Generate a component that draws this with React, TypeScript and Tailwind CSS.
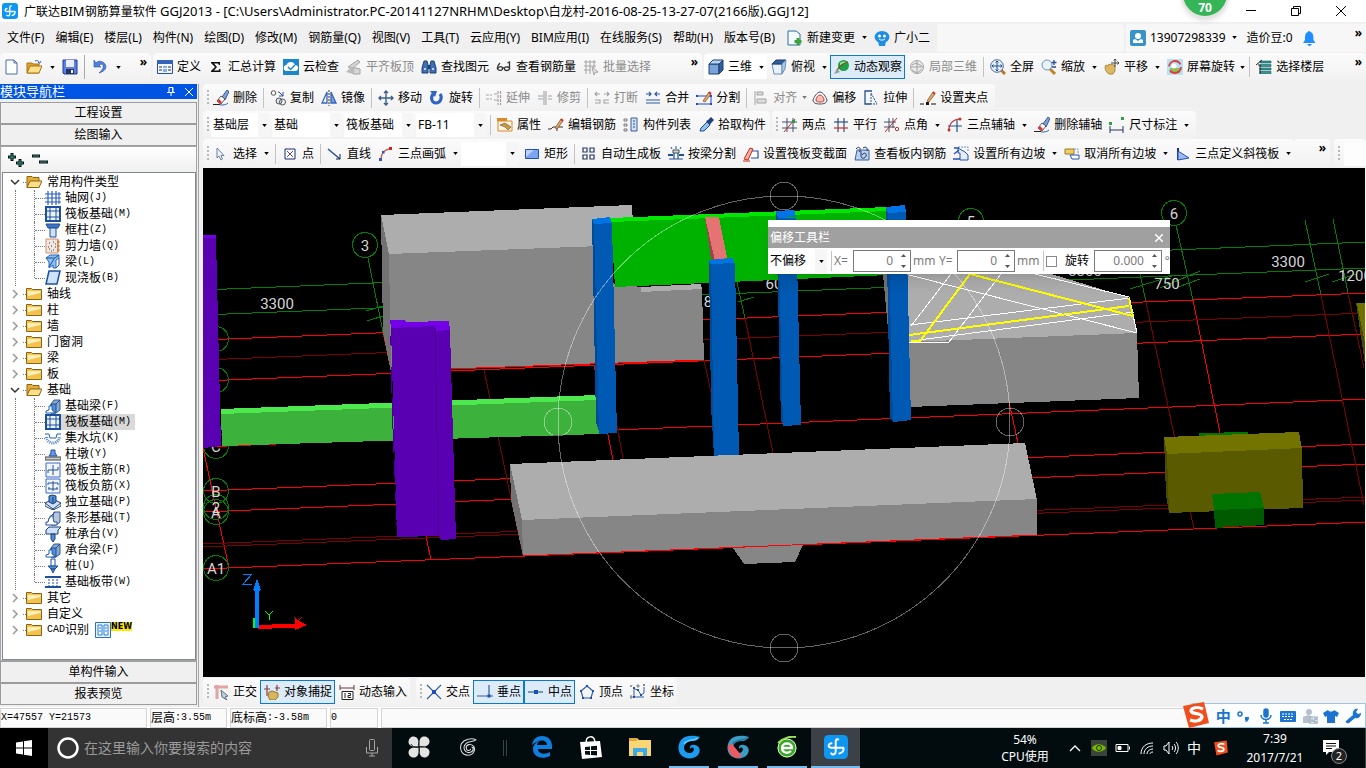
import React from "react";
import type { ReactNode } from "react";

const B = "#2b5aa8";
const D = "#1f3f6e";
const G = "#a3a3a3";

const pencil = (
  <>
    <path d="M7 11 13 2l2 2-6 8z" fill="#e0a868" stroke="#7a4a20" strokeWidth=".7" />
    <path d="M13 2l2 2" stroke="#c33" strokeWidth="2" />
  </>
);
const brush = (
  <>
    <path d="M0 14.500h7" stroke="#222" />
    <path d="M9 7 14 0l2 1.500L12 10z" fill="#7ea2e0" stroke={D} strokeWidth=".8" />
    <path d="M4 11 8 6l4 3-4 5z" fill="#fff" stroke="#333" strokeWidth=".8" />
    <path d="M4 11l2-2 3 3-2 2z" fill="#d33" />
    <path d="M7 15c3 0 6 0 8-2" stroke="#3560b0" fill="none" />
  </>
);
const beam = (
  <>
    <path d="M9 2h6v10l-4 3H6V6z" fill="#8fa8c8" stroke={B} />
    <path d="M6 6h5v9H6z" fill="#4f8fd6" stroke="#1d4f98" />
    <path d="M11 6l4-4" stroke="#1d4f98" />
    <path d="M1 15v-2l3-1V8h3v4l2 1v2z" fill="#fff" stroke="#1d5cb0" />
  </>
);
const raft = (
  <>
    <path d="M1 1h14v14H1z" fill="#eaf2ff" stroke="#1e4f9c" strokeWidth="2" />
    <path d="M5 2v12M11 2v12M2 5h12M2 11h12" stroke="#1e4f9c" />
  </>
);

const icons: Record<string, ReactNode> = {
  app: (
    <>
      <rect width="16" height="16" rx="3" fill="#0e97f2" />
      <path
        d="M9.500 3C8 2.500 7.800 3.500 7.800 5v6c0 2-2 2.500-3 1.200M13 8.500H5c-2.500 0-2.500-2.500 0-3M13 8.500c.3 2-.8 3.300-2.800 3.800"
        stroke="#fff"
        strokeWidth="1.300"
        strokeLinecap="round"
        fill="none"
      />
    </>
  ),
  newfile: <path d="M2 1h8l3 3v11H2zM10 1v3h3" fill="#fff" stroke="#4a6fa8" />,
  open: (
    <>
      <path d="M1 14V4h5l1 1h6v9z" fill="#e0a030" stroke="#a87414" />
      <path d="M1 14 4 7h12l-3 7z" fill="#ffe08a" stroke="#a87414" />
      <path d="M9 2c3-1 4 0 4 2M12 3l1.500 1.500L15 2" stroke="#3b6fb5" fill="none" />
    </>
  ),
  save: (
    <>
      <path d="M1 1h14v14H2l-1-1z" fill="#5f7fe0" stroke="#223a9c" />
      <path d="M4 1h8v7H4z" fill="#e8eefc" />
      <path d="M4 10h8v5H4z" fill="#24355f" />
      <path d="M9 11h2v3H9z" fill="#fff" />
    </>
  ),
  undo: <path d="M2 1v7h7L7 6c3-2 5 0 4 3-1 2-2 3-4 5 7-2 8-6 6-9S6 1 4 4z" fill="#4f80e0" stroke="#2450a5" strokeWidth=".6" />,
  define: (
    <>
      <path d="M0.500 1.500h15v13H.5z" fill="#f3f7ff" stroke="#2450a5" />
      <path d="M0 1h16v4H0z" fill="#3565bb" />
      <path d="M2 8h3M2 11h3M11 8h3M11 11h3" stroke="#333" />
      <path d="M6 7h4v2H6zM6 10h4v3H6z" fill="#8bb0e8" />
    </>
  ),
  sigma: <path d="M3 3h9v3h-1l-1-1.500H6L9 8l-3 3.500h4.500L11.500 10h1v3H3v-1l4-4-4-4z" fill="#111" />,
  cloud: (
    <>
      <rect width="16" height="16" fill="#1c86cc" />
      <path d="M4 12a3 3 0 0 1-.5-6A4.500 4.500 0 0 1 12 6a3 3 0 0 1 0 6z" fill="#fff" />
      <path d="M5 8l2.500 2.500L12 6" stroke="#1c86cc" strokeWidth="1.500" fill="none" />
    </>
  ),
  flat: (
    <>
      <path d="M2 8 12 1l2 2-7 6zM7 9v6h7v-5l-4-1z" fill="#d5d5d5" stroke={G} />
      <path d="M0 13l5-5 2 1v6z" fill="#bbb" />
    </>
  ),
  find: (
    <>
      <path d="M1 14V9l2-7h3l1 4v8zM15 14V9l-2-7h-3L9 6v8z" fill="#3f6fb8" stroke={D} />
      <path d="M7 6h2v4H7z" fill={D} />
      <path d="M3 10h2M11 10h2" stroke="#bcd4f7" strokeWidth="2" />
    </>
  ),
  glasses: <path d="M4 4C2 6 1 8 1.500 10c1 2 5 2 5-.5S3 7 1.500 10M8.500 10c0 2 4 2 5 0s-4-3-5-1zM6.500 9h2M13.500 10V3l-2 1" stroke="#333" strokeWidth="1.300" fill="none" />,
  batch: (
    <>
      <path d="M1 3h12M1 7h12M1 11h7M3 1v14M7 1v14M11 1v8" stroke={G} />
      <path d="M9 8l6 5-3 .5L11 16z" fill="#e5e5e5" stroke={G} />
    </>
  ),
  cube: (
    <>
      <path d="M1 5h10v10H1z" fill="#7aa3dc" stroke={D} />
      <path d="M1 5l4-4h10l-4 4z" fill="#b8d4f5" stroke={D} />
      <path d="M11 5l4-4v10l-4 4z" fill="#2f5f9c" stroke={D} />
    </>
  ),
  cubeTop: (
    <>
      <path d="M1 5h10v10H3z" fill="#e8f1fc" stroke="#6d8db8" />
      <path d="M1 5l4-4h10l-4 4z" fill="#2f5f9c" stroke={D} />
      <path d="M11 5l4-4-1 9-3 5z" fill="#a8cbf0" stroke="#6d8db8" />
    </>
  ),
  orbit: (
    <>
      <circle cx="9.500" cy="6.500" r="5.500" fill="#1ea14a" />
      <path d="M6 4c2-2 5-2 6 0-3 0-5 1-6 3z" fill="#9be08e" />
      <path d="M2 14C3 9 9 4 14 3" stroke="#8a4a20" strokeWidth="1.200" fill="none" />
      <path d="M0 15l6-2-3-3z" fill="#999" />
    </>
  ),
  partial: (
    <>
      <circle cx="8" cy="8" r="6.500" fill="#ececec" stroke={G} />
      <path d="M3 6l4-2 6 3M3 11l5 3 5-4M8 2v12M2 8h12" stroke={G} fill="none" />
    </>
  ),
  full: (
    <>
      <path d="M11 11l4 4" stroke="#b57b20" strokeWidth="3" />
      <circle cx="7" cy="7" r="6.300" fill="#e6effc" stroke="#4a6a9a" />
      <path d="M7 2v10M2 7h10M5.500 3.500 7 2l1.500 1.500M5.500 10.500 7 12l1.500-1.500M3.500 5.500 2 7l1.500 1.500M10.500 5.500 12 7l-1.500 1.500" stroke="#24508f" fill="none" />
    </>
  ),
  zoom: (
    <>
      <path d="M9 10l5 5" stroke="#c08325" strokeWidth="3" />
      <circle cx="6" cy="6" r="5" fill="#e8f3ff" stroke="#7891b5" />
      <path d="M13 1v5M10.500 3.500h5M11 8h4" stroke="#24508f" strokeWidth="1.300" />
    </>
  ),
  pan: (
    <>
      <path d="M1 8l1-2 2 1 1-2 2 1 1-1 3 2v5l-2 3H5c-2-1-4-4-4-7z" fill="#dcb862" stroke="#9a7a2a" strokeWidth=".8" />
      <path d="M11 0v8M7 4h8M9.500 1.500 11 0l1.500 1.500M13.500 2.500 15 4l-1.500 1.500" stroke="#444" fill="none" />
    </>
  ),
  screenRot: (
    <>
      <rect width="16" height="16" rx="1" fill="#b8e0f5" />
      <path d="M3 9h10v5H3z" fill="#8cc152" />
      <circle cx="8" cy="8" r="6" fill="none" stroke="#e03c3c" strokeWidth="1.800" strokeDasharray="15 4" />
      <circle cx="7" cy="7" r="2.500" fill="#fff" />
    </>
  ),
  floors: (
    <>
      <path d="M4 2h11v2H4zM4 5.500h11v2H4zM4 9h11v2H4zM4 12.500h11v2H4z" fill="#2f9a96" stroke="#15585a" strokeWidth=".6" />
      <path d="M0 6l6-5M2 6h2v9" stroke="#222" fill="none" />
    </>
  ),
  brush,
  copy: (
    <>
      <circle cx="3.500" cy="3" r="2.300" fill="none" stroke="#555" />
      <circle cx="9" cy="11" r="3" fill="#dde6f5" stroke="#555" />
      <circle cx="12.500" cy="12" r="3" fill="none" stroke="#555" />
      <path d="M8 2h1l4 4M13 2v4H9" stroke="#24508f" fill="none" />
    </>
  ),
  mirror: (
    <>
      <path d="M6 2v11H1z" fill="none" stroke="#3565bb" strokeWidth="1.300" />
      <path d="M10 2v11h5z" fill="#7aa0e0" stroke="#3565bb" strokeWidth="1.300" />
      <path d="M8 0v16" stroke="#333" strokeDasharray="2 1" />
    </>
  ),
  move: <path d="M8 1v14M1 8h14M6 3l2-2 2 2M6 13l2 2 2-2M3 6 1 8l2 2M13 6l2 2-2 2" stroke="#3e5f8a" strokeWidth="1.400" fill="none" />,
  rotate: (
    <>
      <path d="M4 4c-3 4-1 9 3 9s7-5 4-9" stroke="#2f62c4" strokeWidth="3" fill="none" />
      <path d="M1 1h7L6 7z" fill="#2f62c4" />
    </>
  ),
  extend: <path d="M0 5h6M0 9h6M8 4h3M8 10h3M12 1v14M14.500 1v14" stroke={G} strokeWidth="1.200" strokeDasharray="3 1" />,
  trim: <path d="M1 6h5M1 9h5M7 1v14M9 1v14M11 6h4M11 9h4" stroke={G} strokeWidth="1.100" />,
  break: <path d="M1 4h5M3 2 1 4l2 2M10 4h5M13 2l2 2-2 2M1 10h5v3H1M15 10h-5v3h5" stroke={G} strokeWidth="1.100" fill="none" />,
  merge: <path d="M1 4h5M4 2l2 2-2 2M15 4h-5M12 2l-2 2 2 2M1 10h14M1 13h14" stroke={B} strokeWidth="1.200" fill="none" />,
  split: (
    <>
      <path d="M0 6h15v8H0" fill="none" stroke="#2346c4" />
      <path d="M0 5h2v2H0zM14 5h2v2h-2zM0 13h2v2H0zM14 13h2v2h-2z" fill="#2346c4" />
      {pencil}
    </>
  ),
  align: <path d="M2 1v14M4 2h6v3H4zM4 9h9v4H4z" stroke={G} fill="#ddd" />,
  offset: (
    <>
      <path d="M8 2c3 0 6 5 7 8 0 3-3 4-7 4s-7-1-7-4c1-3 4-8 7-8z" fill="none" stroke="#44506a" />
      <path d="M8 5c2 0 4 3 4 5s-2 2-4 2-4 0-4-2 2-5 4-5z" fill="#f8c0b8" stroke="#d03a2a" />
    </>
  ),
  stretch: (
    <>
      <path d="M9 1H2v13h6" fill="none" stroke="#24508f" strokeWidth="1.300" />
      <path d="M8 3l6 11M8 4v10h6" fill="none" stroke="#24508f" strokeDasharray="2 1" />
    </>
  ),
  grip: (
    <>
      <path d="M0 14h4M11 14h5" stroke="#111" />
      <path d="M6 12h3v3H6z" fill="#111" />
      {pencil}
    </>
  ),
  props: (
    <>
      <path d="M0 1h10v3H0z" fill="#d98a2a" />
      <path d="M1 4h14v10H1z" fill="#fdf3dc" stroke="#d98a2a" />
      <path d="M3 8l5-2 6 4-3 3-3-3z" fill="#c99a3c" stroke="#555" strokeWidth=".6" />
    </>
  ),
  editRebar: (
    <>
      <path d="M0 12h3l2-2h10M9 10v4" stroke="#333" fill="none" />
      {pencil}
    </>
  ),
  list: (
    <>
      <path d="M8 1h6v13H8z" fill="#d5e0f2" stroke="#3b5f9a" />
      <path d="M10 4h2M10 7h2M10 10h2" stroke="#24508f" />
      <path d="M1 2h3v2H1zM1 7h3v2H1zM1 12h3v2H1z" fill="#fff" stroke="#444" strokeWidth=".7" />
    </>
  ),
  picker: (
    <>
      <path d="M2 14 3 11l6-6 3 3-6 6z" fill="#8fc0f0" stroke="#24508f" />
      <path d="M8 4l2-1 3-3 3 3-3 3-1 2z" fill="#1e3f80" />
    </>
  ),
  twoPt: (
    <>
      <path d="M0 5h15M0 11h15M5 1v14M11 1v14" stroke="#44506a" />
      <path d="M2 15 13 2" stroke="#c03030" />
      <path d="M10 3h3v3h-3z" fill="#2a9a3a" />
    </>
  ),
  parallel: (
    <>
      <path d="M5 1v14M11 1v14" stroke="#44506a" strokeWidth="1.200" />
      <path d="M1 5h14" stroke="#24508f" strokeWidth="1.200" />
      <path d="M1 11h14" stroke="#c03030" strokeWidth="1.200" />
    </>
  ),
  ptAngle: (
    <>
      <path d="M0 5h12M0 10h11M5 1v14M9 1v10" stroke="#44506a" />
      <path d="M1 15 13 1" stroke="#c03030" />
      <circle cx="13" cy="12" r="1.700" fill="none" stroke="#c03030" />
    </>
  ),
  threePt: (
    <>
      <path d="M1 9h14M10 3v12" stroke="#24508f" strokeWidth="1.200" />
      <path d="M2 13C2 6 7 2 13 2" stroke="#c03030" fill="none" strokeWidth="1.200" />
      <circle cx="2" cy="13" r="1.500" fill="#c03030" />
      <circle cx="13" cy="2" r="1.500" fill="#c03030" />
    </>
  ),
  dim: (
    <>
      <path d="M1 9v7M14 9v7M1 13h13" stroke="#24355f" />
      <path d="M0 5h3v3H0zM12 0h3v3h-3z" fill="#2fa03c" />
    </>
  ),
  cursor: <path d="M4 2v10l2-2 2 4 1.500-1L8 9.500h3z" fill="#eef3fa" stroke="#5f7394" strokeWidth=".9" />,
  point: (
    <>
      <path d="M3 3h10v10H3z" fill="#fff" stroke="#1d2f6f" />
      <path d="M5 5l6 6M11 5l-6 6" stroke="#3355b5" />
      <path d="M7 7h2v2H7z" fill="#c03030" />
    </>
  ),
  line: (
    <>
      <path d="M1 3l12 10" stroke="#1d4aa0" strokeWidth="1.400" />
      <path d="M13 8v5H9" stroke="#223" fill="none" />
    </>
  ),
  arc: (
    <>
      <path d="M3 13C3 8 6 3 13 3" stroke="#c86a5a" strokeWidth="1.500" fill="none" />
      <path d="M1 12h3v3H1zM4 5h2.500v2.500H4z" fill="#3355b5" />
      <path d="M11 1h3v3h-3z" fill="#d02020" />
    </>
  ),
  rect: (
    <>
      <path d="M1.500 3.500h13v9h-13z" fill="#7da4f0" stroke="#2450b5" />
      <path d="M2 4h8l-8 7z" fill="#b9d0fb" />
    </>
  ),
  autoSlab: <path d="M2 2h4v4H2zM9 2h4v4H9zM2 9h4v4H2zM9 9h4v4H9z" fill="#fff" stroke="#24355f" strokeWidth="1.200" />,
  beamSplit: (
    <>
      <path d="M1 13h14M6 6v7M10 6v7" stroke="#24508f" strokeWidth="1.200" />
      <path d="M5 4h6v3H5z" fill="#f3d98a" stroke="#24508f" />
      <path d="M0 8h5v2H0zM11 8h5v2h-5z" fill="#24508f" />
      <path d="M8 0v3M3 1l1 2M13 1l-1 2" stroke="#24508f" />
    </>
  ),
  section: (
    <>
      <path d="M7 5h8v7H8" fill="#fff" stroke="#2450b5" strokeWidth="1.200" />
      <path d="M1 13 7 2l3 1-5 11z" fill="#f5b0a0" stroke="#c03020" />
      <path d="M0 15h7" stroke="#c03020" />
    </>
  ),
  slabRebar: (
    <>
      <path d="M3 4h12v10H1z" fill="#b9d0f0" stroke="#3b5f9a" />
      <path d="M2 3c3-4 6 0 3 3M7 5v5c0 3 4 3 5 0s-2-4-4-1M9 2c3-2 5 0 4 3" stroke="#24355f" fill="none" />
    </>
  ),
  slope: (
    <>
      <path d="M5 2v5h2v7h8V9L12 6z" fill="#e5eefc" stroke="#2450b5" />
      <path d="M5 1h10v5" stroke="#7a8fb5" strokeDasharray="2 1" fill="none" />
      <path d="M1 2h5M1 8l5-4M0 13h7" stroke="#2450b5" strokeWidth="1.300" />
    </>
  ),
  unslope: (
    <>
      <path d="M1 3h9v5H1z" fill="#f0cf60" stroke="#9a7a2a" />
      <path d="M6 9h9v4H8z" fill="#fff" stroke="#2450b5" />
      <path d="M10 3h4v5" stroke="#7a8fb5" strokeDasharray="2 1" fill="none" />
    </>
  ),
  slant: (
    <>
      <path d="M3 2v12" stroke="#1d2f6f" strokeWidth="2" />
      <path d="M3 5l11 7-11 2z" fill="#9dbcf0" stroke="#2450b5" />
    </>
  ),
  change: (
    <>
      <path d="M1 1h8l4 3v11H1z" fill="#f4fbff" stroke="#2a6f9a" />
      <path d="M11 8v7M7.500 11.500h7" stroke="#3aa335" strokeWidth="3" />
    </>
  ),
  robot: (
    <>
      <ellipse cx="8" cy="7" rx="7.500" ry="6" fill="#1f8fe6" />
      <path d="M4 11h8l-1 5H5z" fill="#1f8fe6" />
      <circle cx="5.500" cy="6" r="1.500" fill="#fff" />
      <circle cx="10.500" cy="6" r="1.500" fill="#fff" />
      <path d="M5 9c2 1.500 4 1.500 6 0" stroke="#fff" fill="none" />
    </>
  ),
  user: (
    <>
      <rect width="16" height="16" rx="2" fill="#3a93c8" />
      <circle cx="8" cy="6" r="3" fill="#fff" />
      <path d="M3 13v-3l2-1 3 2 3-2 2 1v3z" fill="#fff" />
    </>
  ),
  bell: <path d="M7.500 1h1l1 1c3 1 3 4 3 8l2 3H2l2-3c0-4 0-7 3-8zM6 14h5l-2 2H8z" fill="#1f8fff" />,
  gridJ: (
    <>
      <path d="M0 4h12M0 8h12M0 12h12M3 1v14M7 1v14M11 1v14" stroke="#2a5cc0" strokeWidth="1.200" />
      <path d="M13 3h2v2h-2zM13 7h2v2h-2zM13 11h2v2h-2z" fill="none" stroke="#2a5cc0" />
    </>
  ),
  raft,
  column: (
    <>
      <path d="M1 2h14l-2 4H3z" fill="#3f74c4" stroke="#1e4f9c" />
      <path d="M5 6h6v9H5z" fill="#cfe2fb" stroke="#1e4f9c" />
    </>
  ),
  shear: (
    <>
      <path d="M1 1h12v14H1z" fill="#f0e6e0" stroke="#d09070" />
      <path d="M4 5h1M8 4h1M6 8h1M10 9h1M4 11h1M8 12h1M3 9h1M10 6h1M6 13h1" stroke="#444" />
      <path d="M12 4h3M12 8h3M12 12h3M13 2v12" stroke="#d06a20" />
    </>
  ),
  beamL: (
    <>
      <path d="M1 4l4-3h9v3l-3 2v8H8v-3l-4 3V8z" fill="#8bc0f0" stroke="#2a6ab8" />
      <path d="M1 4h9l4-3M9 5 4 13M11 14l3-3V4" stroke="#1e4f9c" fill="none" />
    </>
  ),
  slab: <path d="M4 1h11l-3 13H1z" fill="#cfe2fb" stroke="#1e4f9c" strokeWidth="1.500" />,
  beam,
  pit: (
    <>
      <path d="M0 4h4l1 4h6l1-4h4" stroke="#2a5cc0" fill="none" />
      <path d="M1.500 7c1 8 12 8 13 0" stroke="#4a80d0" strokeDasharray="1 1" strokeWidth="3" fill="none" />
    </>
  ),
  pier: (
    <>
      <path d="M0 11h16v3H0z" fill="#ccc" stroke="#444" />
      <path d="M4 10l2-3V4h4v3l2 3z" fill="#6a9be0" stroke="#1e4f9c" />
    </>
  ),
  mainBar: (
    <>
      <path d="M1 1h14v14H1z" fill="#f0f5ff" stroke="#3a6ac8" />
      <path d="M8 3v10M3 11V8h10V5" stroke="#24508f" fill="none" />
    </>
  ),
  negBar: (
    <>
      <path d="M1 1h14v14H1z" fill="#f0f5ff" stroke="#3a6ac8" />
      <path d="M8 3v10M3 5h10v2M3 5v2M3 11h10M4 9v2M12 9v2" stroke="#24508f" fill="none" />
    </>
  ),
  isolated: (
    <>
      <path d="M0 9l8-4 8 4-8 6z" fill="#cfe2fb" stroke="#1e3f70" />
      <path d="M4 2l3-1 4 1v6l-3 2-4-2z" fill="#4f8fd6" stroke="#1e3f70" />
      <path d="M0 9v3l8 4v-2M16 9v3l-8 4M8 3v6" stroke="#1e3f70" fill="none" />
    </>
  ),
  strip: (
    <>
      <path d="M9 2h6v10l-4 3H6z" fill="#b9c4d4" stroke={B} />
      <path d="M6 6l4-4" stroke="#1e4f9c" />
      <path d="M1 15v-3h2l1-4h1V6h3v2l1 4h3v3z" fill="#fff" stroke="#1e4f9c" />
    </>
  ),
  pileCap: (
    <>
      <path d="M1 4l3-3h12l-3 3v4H1z" fill="#cfe2fb" stroke="#1e3f70" />
      <path d="M6 8h4v5l-2 3-2-3z" fill="#4f8fd6" stroke="#1e3f70" />
    </>
  ),
  pile: (
    <>
      <path d="M6 1h4v7H6z" fill="#fff" stroke="#1e4f9c" />
      <path d="M3 8h10l-3 3H6zM6 11h4l-2 4z" fill="#4f8fd6" stroke="#1e4f9c" />
    </>
  ),
  band: (
    <>
      <path d="M0 3h16M0 13h16" stroke="#1e4f9c" strokeWidth="2" />
      <path d="M4 2v12M8 2v12M12 2v12" stroke="#1e4f9c" strokeDasharray="2 1" />
    </>
  ),
  folder: (
    <>
      <path d="M.5 13.500v-11h5l1 1h9v10z" fill="#f2c14e" stroke="#8a6414" />
      <path d="M1.500 5h13v2L2 10z" fill="#fff0b8" />
    </>
  ),
  folderOpen: (
    <>
      <path d="M1 13.500v-11h5l1 1h6v10z" fill="#e8ac35" stroke="#8a6414" />
      <path d="M1 13.500 4 7h12l-3 6.500z" fill="#ffe08a" stroke="#8a6414" />
    </>
  ),
  cad: (
    <>
      <path d="M.5.5h15v15H.5z" fill="#e8f3ff" stroke="#2a6fc0" />
      <path d="M3 3h4v10H3zM9 3h4v10H9z" fill="#fff" stroke="#1f7fe0" />
      <path d="M4 6h2M4 9h2M10 6h2M10 9h2" stroke="#1f7fe0" />
    </>
  ),
  ortho: (
    <>
      <path d="M1 3h14M4 1v14" stroke="#dda6a2" strokeWidth="3" />
      <path d="M8 6l7 6-3 1 2 3-5-3z" fill="#c3ccd4" stroke="#5a7282" />
    </>
  ),
  snap: (
    <>
      <path d="M3 1v11M13 1v6M0 5h6M11 4h5" stroke="#8a4040" strokeWidth="1.200" />
      <path d="M5 8l3-1 3 1 3 1v4l-3 3H6l-2-4z" fill="#d8b45c" stroke="#9a7a2a" />
    </>
  ),
  dynInput: (
    <>
      <path d="M1 1v5M15 1v5M1 4h14" stroke="#6a3a3a" />
      <path d="M3 7.500h11v8H3z" fill="#fff" stroke="#222" />
      <path d="M6 9v5M9 9.500h2.500v2H9v2h3" stroke="#222" fill="none" />
    </>
  ),
  cross: (
    <>
      <path d="M1 1l14 14M15 1 1 15" stroke="#335f9a" strokeWidth="1.200" />
      <path d="M6 6h4v4H6z" fill="#1c50b5" />
    </>
  ),
  perp: (
    <>
      <path d="M0 12h16M12 1v11" stroke="#335f9a" strokeWidth="1.200" />
      <path d="M10.500 10.500h3v3h-3z" fill="#1c50b5" />
    </>
  ),
  mid: (
    <>
      <path d="M0 8h15" stroke="#335f9a" strokeWidth="1.200" />
      <path d="M6 6h4v4H6z" fill="#1c50b5" />
    </>
  ),
  vertex: (
    <>
      <path d="M8 2l6 5-2 7H4L2 7z" fill="none" stroke="#335f9a" strokeWidth="1.200" />
      <path d="M7 1h2v2H7zM13 6h2v2h-2zM1 6h2v2H1zM3 13h2v2H3zM11 13h2v2h-2z" fill="#1c50b5" />
    </>
  ),
  coord: (
    <>
      <path d="M4 4v9h10M5 5l3 1 3 5 3-2V3" stroke="#335f9a" fill="none" />
      <path d="M3 3h2v2H3zM3 12h2v2H3zM7 5h2v2H7zM10 10h2v2h-2z" fill="#1c50b5" />
      <path d="M0 1l1 2 1-2M13 0l2 2M15 0l-2 2M0 12h2v2H0zM7 1h2v2H7z" stroke="#555" strokeWidth=".7" fill="none" />
    </>
  ),
};

function Icon({ name, big }: { name: string; big?: boolean }) {
  return (
    <svg viewBox="0 0 16 16" className={big ? "size-6 shrink-0" : "size-4 shrink-0"} aria-hidden="true">
      {icons[name]}
    </svg>
  );
}

function Caret({ tight, dim }: { tight?: boolean; dim?: boolean }) {
  return (
    <span className={`flex shrink-0 items-center justify-center ${tight ? "w-2" : "w-3"}`}>
      <svg viewBox="0 0 6 4" className={`h-[3px] w-[5px] ${dim ? "fill-[#777]" : "fill-black"}`} aria-hidden="true">
        <path d="M0 0h6L3 4z" />
      </svg>
    </span>
  );
}

type ToolProps = { icon: string; label: string; off?: boolean; on?: boolean; caret?: boolean; tight?: boolean };
function Tool({ icon, label, off, on, caret, tight }: ToolProps) {
  return (
    <button
      type="button"
      disabled={off}
      className={`flex h-6 shrink-0 items-center whitespace-nowrap ${off ? "text-[#8b8b8b]" : "text-black"}`}
    >
      <span
        className={`flex h-full items-center gap-1 border pr-0.5 pl-[3px] ${
          on ? "border-[#0b78d7] bg-[#dcebf8]" : "border-transparent"
        }`}
      >
        <Icon name={icon} />
        {label}
      </span>
      {(caret || tight) && <Caret tight={tight} dim={off} />}
    </button>
  );
}

function Sep() {
  return (
    <span className="flex h-5 w-1.5 shrink-0 justify-center">
      <span className="w-px bg-[#c3c3c3]" />
    </span>
  );
}

function Grip() {
  return <span className="ml-1 h-4 w-0.5 shrink-0 bg-[repeating-linear-gradient(#b8b8b8_0_2px,transparent_2px_4px)]" />;
}

function More() {
  return (
    <button type="button" aria-label="更多" className="self-start px-1 pt-px leading-4 font-bold">
      »
    </button>
  );
}

const strip = "flex shrink-0 items-center rounded-sm bg-linear-to-b from-[#fbfbfb] to-[#f1f1f1]";

function Combo({ label, value, width }: { label: string; value: string; width: string }) {
  return (
    <span className={`flex h-6 shrink-0 items-center bg-white ${width}`}>
      <select aria-label={label} className="h-full min-w-0 flex-1 appearance-none bg-white pl-0.5 outline-none">
        <option>{value}</option>
      </select>
      <span className="flex h-full items-center bg-[#f6f6f6]">
        <Caret />
      </span>
    </span>
  );
}

const menus = ["文件(F)", "编辑(E)", "楼层(L)", "构件(N)", "绘图(D)", "修改(M)", "钢筋量(Q)", "视图(V)", "工具(T)", "云应用(Y)", "BIM应用(I)", "在线服务(S)", "帮助(H)", "版本号(B)"];

function TitleBar() {
  return (
    <header className="relative flex h-[22px] items-center bg-white pl-0.5">
      <Icon name="app" />
      <h1 className="ml-1.5 flex-1 text-[13px] whitespace-nowrap">
        <span className="text-xs">广联达</span>BIM<span className="text-xs">钢筋算量软件</span>
        {" GGJ2013 - [C:\\Users\\Administrator.PC-20141127NRHM\\Desktop\\"}
        <span className="text-xs">白龙村</span>-2016-08-25-13-27-07(2166<span className="text-xs">版</span>).GGJ12]
      </h1>
      <div className="absolute -top-[30px] right-[137px] z-10 flex size-12 items-end justify-center rounded-full border-2 border-[#e4e4e4] bg-[#35b558] font-bold text-white shadow-md">
        70
      </div>
      <div className="flex items-center gap-[35px] pr-5">
        <button type="button" aria-label="最小化">
          <svg viewBox="0 0 10 10" className="size-2.5" stroke="#000" fill="none"><path d="M0 4.500h10" /></svg>
        </button>
        <button type="button" aria-label="还原">
          <svg viewBox="0 0 10 10" className="size-2.5" stroke="#000" fill="none"><path d="M.5 2.500h7v7h-7zM2.500 2.500v-2h7v7h-2" /></svg>
        </button>
        <button type="button" aria-label="关闭">
          <svg viewBox="0 0 10 10" className="size-2.5" stroke="#000" fill="none"><path d="M0 0l10 10M10 0 0 10" /></svg>
        </button>
      </div>
    </header>
  );
}

function MenuBar() {
  return (
    <nav className="flex h-[31px] items-center pl-[7px]">
      <div className="flex shrink-0 gap-[11px]">
        {menus.map((m) => (
          <button key={m} type="button" className="whitespace-nowrap">{m}</button>
        ))}
      </div>
      <div className="ml-2 flex">
        <Tool icon="change" label="新建变更" caret />
        <Tool icon="robot" label="广小二" />
      </div>
      <div className="ml-1 h-7 flex-1 rounded-sm bg-[#f7f7f7]" />
      <div className="ml-0.5 flex h-7 w-60 shrink-0 items-center bg-[#f7f7f7]">
        <Tool icon="user" label="13907298339" caret />
        <span className="ml-1.5">造价豆:0</span>
        <button type="button" aria-label="消息" className="ml-2"><Icon name="bell" /></button>
        <span className="flex-1" />
        <More />
      </div>
    </nav>
  );
}

function MainTools() {
  return (
    <div className="flex h-[31px] items-start">
      <div className={`${strip} h-7 w-[151px] pl-0.5`}>
        <button type="button" aria-label="新建" className="ml-0.5 w-[22px]"><Icon name="newfile" /></button>
        <button type="button" aria-label="打开" className="flex items-center"><Icon name="open" /><span className="w-1" /><Caret /></button>
        <button type="button" aria-label="保存" className="ml-1"><Icon name="save" /></button>
        <span className="ml-1.5 h-6 w-px bg-[#aaa]" />
        <button type="button" aria-label="撤销" className="ml-[7px] flex items-center"><Icon name="undo" /><span className="w-1" /><Caret /></button>
        <span className="flex-1" />
        <More />
      </div>
      <div className={`${strip} ml-0.5 h-7 w-[549px]`}>
        <Tool icon="define" label="定义" />
        <Tool icon="sigma" label="汇总计算" />
        <Tool icon="cloud" label="云检查" />
        <Tool icon="flat" label="平齐板顶" off />
        <Tool icon="find" label="查找图元" />
        <Tool icon="glasses" label="查看钢筋量" />
        <Tool icon="batch" label="批量选择" off />
        <span className="flex-1" />
        <More />
      </div>
      <div className={`${strip} ml-0.5 h-7 flex-1`}>
        <span className="bg-white"><Tool icon="cube" label="三维" caret /></span>
        <Tool icon="cubeTop" label="俯视" caret />
        <Tool icon="orbit" label="动态观察" on />
        <Tool icon="partial" label="局部三维" off />
        <Sep />
        <Tool icon="full" label="全屏" />
        <Tool icon="zoom" label="缩放" caret />
        <Tool icon="pan" label="平移" caret />
        <Tool icon="screenRot" label="屏幕旋转" tight />
        <Sep />
        <Tool icon="floors" label="选择楼层" />
        <span className="flex-1" />
        <More />
      </div>
    </div>
  );
}

function EditTools() {
  return (
    <div className="flex flex-col">
      <div className="flex h-[27px]">
        <div className={`${strip} pr-1`}>
          <Grip />
          <Tool icon="brush" label="删除" />
          <Sep />
          <Tool icon="copy" label="复制" />
          <Tool icon="mirror" label="镜像" />
          <Sep />
          <Tool icon="move" label="移动" />
          <Tool icon="rotate" label="旋转" />
          <Sep />
          <Tool icon="extend" label="延伸" off />
          <Tool icon="trim" label="修剪" off />
          <Sep />
          <Tool icon="break" label="打断" off />
          <Tool icon="merge" label="合并" />
          <Tool icon="split" label="分割" />
          <Sep />
          <Tool icon="align" label="对齐" off tight />
          <Tool icon="offset" label="偏移" />
          <Tool icon="stretch" label="拉伸" />
          <Sep />
          <Tool icon="grip" label="设置夹点" />
        </div>
      </div>
      <div className="flex h-7">
        <div className={`${strip} pr-px`}>
          <Grip />
          <span className="ml-0.5 flex gap-0.5">
            <Combo label="楼层" value="基础层" width="w-[59px]" />
            <Combo label="构件大类" value="基础" width="w-[70px]" />
            <Combo label="构件类型" value="筏板基础" width="w-[70px]" />
            <Combo label="构件" value="FB-11" width="w-[70px]" />
          </span>
          <span className="w-px" />
          <Sep />
          <Tool icon="props" label="属性" />
          <Tool icon="editRebar" label="编辑钢筋" />
          <Tool icon="list" label="构件列表" />
          <Tool icon="picker" label="拾取构件" />
        </div>
        <div className={`${strip} ml-0.5 pr-1`}>
          <Grip />
          <Tool icon="twoPt" label="两点" />
          <Tool icon="parallel" label="平行" />
          <Tool icon="ptAngle" label="点角" caret />
          <Tool icon="threePt" label="三点辅轴" caret />
          <Tool icon="brush" label="删除辅轴" />
          <Tool icon="dim" label="尺寸标注" caret />
        </div>
      </div>
      <div className="flex h-[29px]">
        <div className={`${strip}`}>
          <Grip />
          <Tool icon="cursor" label="选择" caret />
          <Sep />
          <Tool icon="point" label="点" />
          <Sep />
          <Tool icon="line" label="直线" />
          <Tool icon="arc" label="三点画弧" caret />
          <Combo label="画法" value="" width="w-[57px]" />
          <span className="w-0.5" />
          <Tool icon="rect" label="矩形" />
          <Sep />
          <Tool icon="autoSlab" label="自动生成板" />
          <Tool icon="beamSplit" label="按梁分割" />
          <Tool icon="section" label="设置筏板变截面" />
          <Tool icon="slabRebar" label="查看板内钢筋" />
          <Tool icon="slope" label="设置所有边坡" caret />
          <Tool icon="unslope" label="取消所有边坡" caret />
          <Tool icon="slant" label="三点定义斜筏板" caret />
        </div>
        <div className={`${strip} w-9 justify-end`}><More /></div>
        <div className={`${strip} ml-1 flex-1`}><Grip /><span className="ml-1 h-6 flex-1 bg-[#fdfdfd]" /></div>
      </div>
    </div>
  );
}

type Node = { icon: string; text: string; latin?: string; sel?: boolean };
const common: Node[] = [
  { icon: "gridJ", text: "轴网", latin: "(J)" },
  { icon: "raft", text: "筏板基础", latin: "(M)" },
  { icon: "column", text: "框柱", latin: "(Z)" },
  { icon: "shear", text: "剪力墙", latin: "(Q)" },
  { icon: "beamL", text: "梁", latin: "(L)" },
  { icon: "slab", text: "现浇板", latin: "(B)" },
];
const foundation: Node[] = [
  { icon: "beam", text: "基础梁", latin: "(F)" },
  { icon: "raft", text: "筏板基础", latin: "(M)", sel: true },
  { icon: "pit", text: "集水坑", latin: "(K)" },
  { icon: "pier", text: "柱墩", latin: "(Y)" },
  { icon: "mainBar", text: "筏板主筋", latin: "(R)" },
  { icon: "negBar", text: "筏板负筋", latin: "(X)" },
  { icon: "isolated", text: "独立基础", latin: "(P)" },
  { icon: "strip", text: "条形基础", latin: "(T)" },
  { icon: "pileCap", text: "桩承台", latin: "(V)" },
  { icon: "beam", text: "承台梁", latin: "(F)" },
  { icon: "pile", text: "桩", latin: "(U)" },
  { icon: "band", text: "基础板带", latin: "(W)" },
];
const tree: { text: string; latin?: string; kids?: Node[] }[] = [
  { text: "常用构件类型", kids: common },
  { text: "轴线" }, { text: "柱" }, { text: "墙" }, { text: "门窗洞" }, { text: "梁" }, { text: "板" },
  { text: "基础", kids: foundation },
  { text: "其它" }, { text: "自定义" }, { text: "识别", latin: "CAD" },
];

const mono = "font-['Liberation_Mono',monospace] text-[10px]";

function Tree() {
  return (
    <ul className="min-h-0 flex-1 overflow-hidden border border-[#828790] bg-white pt-px leading-4">
      {tree.map((t) => (
        <li key={t.text}>
          <div className="flex h-4 items-center whitespace-nowrap">
            <svg viewBox="0 0 10 10" className="ml-[7px] size-2.5" fill="none" strokeWidth="1.500" stroke={t.kids ? "#333" : "#999"}>
              <path d={t.kids ? "M1 3l4 4 4-4" : "M3 1l4 4-4 4"} />
            </svg>
            <span className="ml-[3px] w-[3px] border-t border-dotted border-[#777]" />
            <Icon name={t.kids ? "folderOpen" : "folder"} />
            <span className="ml-[5px] flex items-center">
              {t.latin && <span className={mono}>{t.latin}</span>}
              {t.text}
            </span>
            {t.latin && (
              <>
                <span className="w-1.5" />
                <Icon name="cad" />
                <span className="self-start bg-[#ffe800] font-['DejaVu_Sans',sans-serif] text-[8px] leading-[9px] font-bold">NEW</span>
              </>
            )}
          </div>
          {t.kids && (
            <ul className="ml-3 border-l border-dotted border-[#777]">
              {t.kids.map((k, i) => (
                <li key={k.text + k.latin} className="flex h-4 items-center pl-[18px] whitespace-nowrap">
                  <span className={`border-l border-dotted border-[#777] ${i === t.kids!.length - 1 ? "h-2 self-start" : "h-4"}`} />
                  <span className="w-2.5 border-t border-dotted border-[#777]" />
                  <span className={`flex h-4 items-center gap-1 pr-1 ${k.sel ? "bg-[#d9d9d9]" : ""}`}>
                    <Icon name={k.icon} />
                    <span className="flex items-center">
                      {k.text}
                      <span className={mono}>{k.latin}</span>
                    </span>
                  </span>
                </li>
              ))}
            </ul>
          )}
        </li>
      ))}
    </ul>
  );
}

const navBtn = "h-[22px] shrink-0 border border-[#9c9c9c] bg-[#f0f0f0] leading-5";

function Sidebar() {
  return (
    <aside className="flex w-[199px] shrink-0 flex-col border-r border-[#a5a5a5] pr-px">
      <div className="flex h-[15px] shrink-0 items-center bg-[#0054e3] text-[13px] leading-[15px] text-white">
        模块导航栏
        <span className="flex-1" />
        <button type="button" aria-label="固定">
          <svg viewBox="0 0 8 9" className="h-[9px] w-2" fill="none" stroke="#fff"><path d="M2 .5h4v5H2zM5.500 0v6M0 5.500h8M4 6v3" /></svg>
        </button>
        <button type="button" aria-label="关闭" className="mr-1 ml-2.5">
          <svg viewBox="0 0 8 8" className="size-2" fill="none" stroke="#fff"><path d="M0 0l8 8M8 0 0 8" /></svg>
        </button>
      </div>
      <div className="mt-[3px] flex min-h-0 flex-1 flex-col">
        <button type="button" className={navBtn}>工程设置</button>
        <button type="button" className={navBtn}>绘图输入</button>
        <div className="flex min-h-0 flex-1 flex-col border border-[#a5a5a5] pl-px">
          <div className="flex h-[25px] shrink-0 items-center gap-2 bg-linear-to-b from-white to-[#f0f0f0] pl-1.5">
            <button type="button" aria-label="展开">
              <svg viewBox="0 0 16 15" className="h-[15px] w-4" fill="none"><path d="M0 5h8M4 1v8M8 11h8M12 7v8" stroke="#111" strokeWidth="3" /><path d="M1 5h6M4 2v6M9 11h6M12 8v6" stroke="#1f9a8a" /></svg>
            </button>
            <button type="button" aria-label="折叠">
              <svg viewBox="0 0 16 15" className="h-[15px] w-4" fill="none"><path d="M0 4h8M7 10h9" stroke="#111" strokeWidth="3" /><path d="M1 4h6M8 10h7" stroke="#1f9a8a" /></svg>
            </button>
          </div>
          <Tree />
        </div>
        <button type="button" className={navBtn}>单构件输入</button>
        <button type="button" className={navBtn}>报表预览</button>
      </div>
      <div className="h-0.5" />
    </aside>
  );
}

const bubbles: [number, number, string][] = [
  [365, 245, "3"], [971, 221, "5"], [1174, 213, "6"], [216, 568, "A1"], [216, 491, "B"], [216, 507, "2"], [216, 512, "A"], [216, 446, "C"], [216, 339, ""], [216, 380, ""],
];

function Scene() {
  return (
    <svg viewBox="203 168 1162 509" preserveAspectRatio="xMinYMin slice" className="size-full" shapeRendering="crispEdges">
      <g stroke="#008000" fill="none">
        <path d="M203 290 1366 242M203 315 1366 268M368 258 383 332M366 311l17-5M367 321l16-5M737 282l8 36M738 302l16-5M1140 274l6 28M1176 225l17 75M1305 220l16 75M1333 219l15 74M1130 289l42-13M1160 288l40-17M1178 287l22-8M1305 282l24-8M1332 282l24-8" />
      </g>
      <g stroke="#ff0000" fill="none">
        <path d="M203 340 1366 293M203 381 1366 334M203 447 1366 399M203 491 1366 444M203 512 1366 464M203 569 1366 522M203 448l26 120M383 332l8 38M426 536l5 24M594 365l19 95M1009 402l9 41M1193 300l27 133" />
      </g>
      <g stroke="#7d0000" fill="none">
        <path d="M203 360 1366 313M203 544 1366 497M203 547 1366 500M484 370l39 185M615 415l8 43M704 360l12 55M745 318l28 135M1146 302l48 227M1321 295l43 210M1348 293l16 75" />
      </g>
      <g fill="none" stroke="#008000">
        {bubbles.map(([x, y]) => <circle key={`${x}-${y}`} cx={x} cy={y} r="12.500" />)}
      </g>
      <g fill="#d6d6d6" fontFamily="Roboto, sans-serif" fontSize="15" textAnchor="middle" shapeRendering="auto">
        {bubbles.map(([x, y, t]) => <text key={`${x}-${y}`} x={x} y={y + 6}>{t}</text>)}
        <text x="277" y="309">3300</text>
        <text x="1288" y="267">3300</text>
        <text x="1085" y="276">3300</text>
        <text x="1167" y="289">750</text>
        <text x="1355" y="281">1200</text>
        <text x="774" y="289">60</text>
        <text x="708" y="307">8</text>
      </g>

      <path d="M381 215 632 205l2 40-245 9z" fill="#adadad" />
      <path d="M389 254 600 246l14 38 27 3v4l61-2 2 71-313 11z" fill="#868686" />
      <path d="M641 287l60-3 1 5-61 3z" fill="#adadad" />
      <path d="M381 215l8 39 2 118-8-40z" fill="#727272" />
      <path d="M391 371 704 360" stroke="#f00" />

      <path d="M221 409 598 395v7L221 415z" fill="#4de84d" />
      <path d="M221 414 598 400l2 34-378 12z" fill="#3cb23c" />

      <path d="M610 218 888 207v5L611 223z" fill="#00e600" />
      <path d="M611 222 888 211v64l-273 12z" fill="#00b200" />
      <path d="M705 217h14l8 41-13 2z" fill="#e67373" />
      <path d="M705 217l6 42 4 2z" fill="#984848" />

      <path d="M592 219l2 4 6 211-4-12z" fill="#004b97" />
      <path d="M594 223h18l5 210-18 1z" fill="#0059b2" />
      <path d="M592 219l18-2 2 6-18 1z" fill="#0073e6" />
      <path d="M709 260l2 4 3 192-3-50z" fill="#004b97" />
      <path d="M711 264l24-1 4 192-25 1z" fill="#0059b2" />
      <path d="M709 260l24-2 1 5-24 1z" fill="#0073e6" />
      <path d="M776 211l2 6 6 208-3-4z" fill="#004b97" />
      <path d="M778 218h18l5 207-18 1z" fill="#0059b2" />
      <path d="M776 211l18-1 2 7-18 1z" fill="#0073e6" />

      <path d="M883 274h7l2 100z" fill="#727272" />
      <path d="M888 250h85l157 48 7 35-228 9-20 2z" fill="#adadad" />
      <path d="M908 342 1137 333l2 65-230 9z" fill="#868686" />
      <path d="M909 275l228 58M1035 274l94 23 8 36M910 325l220-27M909 342h40l52-68M911 341 1134 312M911 326l40-52" stroke="#fff" fill="none" />
      <path d="M909 335 1129 306M911 341h9l50-67 163 42-4-18" stroke="#ffff00" strokeWidth="2" fill="none" />
      <path d="M886 207l2 5 5 210-3-4z" fill="#004b97" />
      <path d="M888 212l18-1 5 209-18 2z" fill="#0059b2" />
      <path d="M886 207l19-2 1 7-18 1z" fill="#0073e6" />

      <path d="M203 235h13v4h-13z" fill="#7300e6" />
      <path d="M203 238h13l5 208-18 2z" fill="#5900b2" />
      <path d="M390 320h15l1 2 43-1 1 10-14 1-2-6-43 2z" fill="#7300e6" />
      <path d="M391 328l43-2 2 5 14-1 6 209-15 1-2-4-42 1z" fill="#5900b2" />
      <path d="M390 320l7 217-5-120z" fill="#48008f" />
      <path d="M435 327l4 209" stroke="#48008f" />

      <path d="M510 464 1025 443l12 57-515 20z" fill="#adadad" />
      <path d="M522 520 1037 499v36l-514 21z" fill="#868686" />
      <path d="M510 464l12 56 1 36-12-56z" fill="#727272" />
      <path d="M523 556 1037 535" stroke="#f00" />
      <path d="M733 548l70-3-8 17-51 2z" fill="#868686" />

      <path d="M1199 436v-3l49-1v3z" fill="#007300" />
      <path d="M1164 437l135-5 3 17-135 5z" fill="#737300" />
      <path d="M1167 454l135-6 1 60-134 5z" fill="#5a5a00" />
      <path d="M1164 437l3 17 2 59-3-18z" fill="#4a4a00" />
      <path d="M1212 494l48-2 4 16-50 2z" fill="#007300" />
      <path d="M1214 510l50-2v17l-49 3z" fill="#005a00" />
      <path d="M1356 303h10v68z" fill="#4a4a00" />
      <path d="M1357 303h9v45z" fill="#737300" />

      <g fill="none" stroke="#fff" strokeOpacity=".4">
        <circle cx="784" cy="422" r="226" />
        <circle cx="784" cy="196" r="14" />
        <circle cx="784" cy="648" r="14" />
        <circle cx="558" cy="422" r="14" />
        <circle cx="1010" cy="422" r="14" />
      </g>

      <path d="M256 619h-2v8h6" stroke="#0f0" strokeWidth="2" fill="none" />
      <path d="M258 627 300 625.500" stroke="#f00" strokeWidth="4" />
      <path d="M295 619l12 6-12 5z" fill="#f00" />
      <path d="M257 628V588" stroke="#0080ff" strokeWidth="4" />
      <path d="M257 579l4 11-4 3-4-3z" fill="#0080ff" />
      <path d="M243 574h9l-9 10h9" stroke="#0080ff" fill="none" />
      <path d="M265 611l4 4 4-4M269 615v5" stroke="#0f0" fill="none" />
      <path d="M294 617l8 8M302 617l-8 8" stroke="#f00" fill="none" />
    </svg>
  );
}

function Spin({ label, value, width }: { label: string; value: string; width: string }) {
  return (
    <span className={`flex h-[22px] shrink-0 items-center border border-[#7a7a7a] bg-white ${width}`}>
      <input aria-label={label} defaultValue={value} className="min-w-0 flex-1 bg-transparent pr-2 text-right text-xs text-[#7b7b7b] outline-none" />
      <svg viewBox="0 0 5 14" className="mr-1 h-3.5 w-[5px] fill-[#555]" aria-hidden="true"><path d="M0 3h5L2.500 0zM0 11h5l-2.500 3z" /></svg>
    </span>
  );
}

function OffsetBar() {
  return (
    <section className="absolute top-[52px] left-[565px] w-[402px] border-t-[7px] border-white bg-white shadow-lg">
      <div className="flex h-[21px] items-center bg-[#a0a0a0] pr-[7px] pl-0.5 text-white">
        <h2 className="flex-1">偏移工具栏</h2>
        <button type="button" aria-label="关闭">
          <svg viewBox="0 0 8 8" className="size-2" stroke="#fff" strokeWidth="1.500"><path d="M0 0l8 8M8 0 0 8" /></svg>
        </button>
      </div>
      <div className="flex h-[26px] items-center whitespace-nowrap text-[#7b7b7b]">
        <span className="text-black"><Combo label="偏移方式" value="不偏移" width="w-[59px]" /></span>
        <span className="w-px" />
        <Sep />
        <span className="w-[19px]">X=</span>
        <Spin label="X" value="0" width="w-[58px]" />
        <span className="w-7 pl-0.5">mm</span>
        <span className="w-[18px]">Y=</span>
        <Spin label="Y" value="0" width="w-[58px]" />
        <span className="w-[25px] pl-0.5">mm</span>
        <Sep />
        <label className="flex flex-1 items-center gap-2 text-black">
          <input type="checkbox" className="size-[11px] appearance-none border border-[#8a8a8a] bg-white" />
          旋转
        </label>
        <Spin label="角度" value="0.000" width="w-[68px]" />
        <span className="w-2 text-right">°</span>
      </div>
    </section>
  );
}

function StatusBar() {
  const cell = "flex items-center border border-[#d4d4d4] bg-[#fafafa] whitespace-nowrap";
  const half = "font-['Liberation_Mono',monospace] text-[10px]";
  return (
    <footer className="relative flex h-[21px] shrink-0 gap-[3px] bg-white pt-px">
      <div className={`${cell} ${half} w-[147px]`}>X=47557 Y=21573</div>
      <div className={`${cell} w-[77px]`}>层高<span className={half}>:3.55m</span></div>
      <div className={`${cell} w-[97px]`}>底标高<span className={half}>:-3.58m</span></div>
      <div className={`${cell} ${half} w-12`}>0</div>
      <div className={`${cell} flex-1`} />
      <div className="absolute right-0 bottom-0 flex h-[25px] w-[177px] items-center justify-between rounded-l border border-[#9fc3e0] bg-[#fbfdff] pr-1 text-[#1c74d0]">
        <svg viewBox="0 0 28 28" className="-mt-0.5 -ml-2 size-7">
          <path d="M1 5 22 1l5 21-20 5z" fill="#f04e1c" />
          <path d="M21 8C15 5 9 7 9 10c1 4 11 1 11 6-1 4-7 5-12 3" fill="none" stroke="#fff" strokeWidth="3.200" />
        </svg>
        <span className="text-[15px] font-bold">中</span>
        <svg viewBox="0 0 16 16" className="size-4"><circle cx="4" cy="6" r="2" fill="none" stroke="currentColor" strokeWidth="1.500" /><path d="M9 9h4c0 3-1 4-3 5l-1-1 1-1H9z" fill="currentColor" /></svg>
        <svg viewBox="0 0 16 16" className="size-4" fill="none" stroke="currentColor" strokeWidth="1.500"><rect x="6" y="1" width="4" height="8" rx="2" fill="currentColor" /><path d="M3 7c0 6 10 6 10 0M8 12v3M5 15h6" /></svg>
        <svg viewBox="0 0 16 16" className="size-4"><rect y="3" width="16" height="11" rx="1" fill="currentColor" /><path d="M2 6h12M2 8.500h12M4 11.500h8" stroke="#fff" strokeDasharray="2 1" /></svg>
        <svg viewBox="0 0 16 16" className="size-4" fill="#b4c0d0"><circle cx="7" cy="4" r="3" /><path d="M1 15V9l5-2 5 2v6z" /><path d="M8 9h8v7H8z" fill="#dfe6ef" stroke="#9aa8bc" /><path d="M10 11v3M12 11h3M12 12v2h3" stroke="#8090a8" fill="none" /></svg>
        <svg viewBox="0 0 16 16" className="size-4" fill="currentColor"><path d="M5 2c1 2 5 2 6 0l5 3-2 4-2-1v7H4V8L2 9 0 5z" /></svg>
        <svg viewBox="0 0 16 16" className="size-4"><path d="M1 13 8 7c-1-4 2-7 5-6l-2 3 2 2 3-1c0 4-3 6-6 5l-6 5c-2 1-4-1-3-2z" fill="currentColor" /></svg>
      </div>
    </footer>
  );
}

function TaskCell({ label, on, open, children }: { label: string; on?: boolean; open?: boolean; children: ReactNode }) {
  return (
    <button type="button" aria-label={label} className={`flex h-full w-[49px] shrink-0 flex-col items-center ${on ? "bg-[#3b4146]" : ""}`}>
      <span className="flex flex-1 items-center">{children}</span>
      <span className={`h-0.5 ${on ? "w-full" : "w-10"} ${on || open ? "bg-[#76b9ed]" : ""}`} />
    </button>
  );
}

function TaskBar() {
  return (
    <footer className="flex h-10 shrink-0 items-center bg-[#020b0e] text-white">
      <button type="button" aria-label="开始" className="flex h-full w-12 items-center justify-center bg-black">
        <svg viewBox="0 0 16 16" className="size-4" fill="#fff"><path d="M0 2.500 7 1.500v6H0zM8 1.300 16 0v7.500H8zM0 8.500h7v6l-7-1zM8 8.500h8V16l-8-1.300z" /></svg>
      </button>
      <label className="flex h-full w-[344px] items-center bg-[#333] px-2">
        <svg viewBox="0 0 24 24" className="size-6 shrink-0"><circle cx="12" cy="12" r="9.500" fill="none" stroke="#fff" strokeWidth="2.500" /></svg>
        <input aria-label="搜索" placeholder="在这里输入你要搜索的内容" className="ml-1 min-w-0 flex-1 bg-transparent text-sm outline-none placeholder:text-[#9a9a9a]" />
        <svg viewBox="0 0 12 18" className="mr-1.5 h-[18px] w-3 shrink-0" fill="none" stroke="#a5a5a5"><rect x="3.500" y=".5" width="5" height="11" rx="1" /><path d="M.5 8v6h11V8M6 14v3M3 17h6" /></svg>
      </label>
      <span className="w-0.5" />
      <TaskCell label="风扇">
        <svg viewBox="0 0 22 22" className="size-[22px]">
          {[0, 90, 180, 270].map((r) => (
            <g key={r} transform={`rotate(${r} 11 11)`}>
              <path d="M10.500 10.500H6C2 10.500.5 8 .5 6c0-3 2-5.500 5-5.500 4 0 5 4 5 6z" fill="#e4e4e4" />
              <path d="M11 11C10 6 12 4 14 3" fill="none" stroke="#020b0e" />
            </g>
          ))}
        </svg>
      </TaskCell>
      <TaskCell label="螺旋">
        <svg viewBox="0 0 22 22" className="size-5" fill="none" stroke="#d8d8d8" strokeWidth="1.200"><path d="M20 3c-5-2-13-1-16 4-3 6 0 13 7 13 6 0 9-6 6-10-3-3-8-2-8 2 0 3 4 4 5 1M20 3c-3 3-8 1-11 4-5 5-1 11 4 10 4-1 5-5 2-6" /></svg>
      </TaskCell>
      <span className="flex w-[25px] justify-center gap-0.5"><span className="h-4 w-px bg-[#3a4448]" /><span className="h-4 w-px bg-[#3a4448]" /></span>
      <TaskCell label="浏览器">
        <svg viewBox="0 0 22 22" className="size-[22px]"><path d="M1 9C2 3 6 0 11 0c6 0 10 4 10 10v3H7c0 5 7 6 12 3v4c-8 4-17 1-17-7 0-4 3-7 7-8C7 6 6 8 6 9h10c0-6-9-6-15 0z" fill="#1080e0" /></svg>
      </TaskCell>
      <TaskCell label="商店">
        <svg viewBox="0 0 22 24" className="h-6 w-[22px]"><path d="M0 7l20-1 2 16-20 2z" fill="#fff" /><path d="M6 8c0-8 8-8 9-1" fill="none" stroke="#fff" strokeWidth="1.500" /><path d="M5 12l5-.5V15H5zM11 11.300l6-.6V15h-6zM5 16h5v4l-5-.5zM11 16h6v4.500l-6-.4z" fill="#041014" /></svg>
      </TaskCell>
      <TaskCell label="文件管理器">
        <svg viewBox="0 0 22 20" className="h-5 w-[22px]"><path d="M0 1h8l2 2h12v16H0z" fill="#f8d676" /><path d="M0 1h8v3H0z" fill="#e0a83c" /><path d="M4 19v-8h14v8h-4v-4H8v4z" fill="#3fa9e8" /></svg>
      </TaskCell>
      {["#1c9cf0", "#3a9ec4"].map((c, i) => (
        <TaskCell key={c} label={i ? "广联达二" : "广联达一"} open>
          <svg viewBox="0 0 24 24" className="size-6" fill="none">
            <path d="M23 2c-3 4-5 4-8 4-5 0-8 3-8 7 0 3 3 5 6 5 2 0 4-2 4-4-1-2-3-2-4 0-1-3 2-5 5-4 5 1 6 6 3 10-4 4-12 5-17 0-4-5-3-12 1-16C9 0 17 0 23 2z" fill={c} />
            {i === 1 && <path d="M2 10l4-1 10 12-4 2c-6 0-10-6-10-13z" fill="#ee5a62" />}
            <path d="M21 3c-4 3-11 1-14 6" stroke={i ? "#2c6f98" : "#65d0ff"} strokeWidth="1.500" />
          </svg>
        </TaskCell>
      ))}
      <TaskCell label="安全浏览器" open>
        <svg viewBox="0 0 22 22" className="size-[22px]"><circle cx="11" cy="12" r="9.500" fill="#3aa52a" /><circle cx="11" cy="12" r="9" fill="none" stroke="#d9f5c0" /><path d="M6 12h10c0-6-10-6-10 0 0 5 6 6 9 3" fill="none" stroke="#fff" strokeWidth="2.300" /><path d="M2 7C8 1 16 0 20 1" stroke="#9de05a" strokeWidth="2" fill="none" /></svg>
      </TaskCell>
      <TaskCell label="算量软件" on><Icon name="app" big /></TaskCell>
      <span className="flex-1" />
      <div className="w-16 text-center leading-[17px]">54%<br />CPU使用</div>
      <div className="ml-2.5 flex items-center gap-2">
        <svg viewBox="0 0 16 16" className="size-4" fill="none" stroke="#fff" strokeWidth="1.300"><path d="M3 11l5-5 5 5" /></svg>
        <svg viewBox="0 0 16 16" className="size-4"><path d="M0 0h16v16H0z" fill="#3b4438" /><path d="M1 8c3-5 10-5 14 0-4 5-11 5-14 0z" fill="#76b900" /><circle cx="8" cy="8" r="2.500" fill="none" stroke="#24351a" /></svg>
        <svg viewBox="0 0 16 16" className="size-4" fill="none" stroke="#fff"><path d="M1 4.500h12v7H1zM14.500 6.500v3" /><path d="M3 6.500h3v3H3z" fill="#fff" /></svg>
        <svg viewBox="0 0 16 16" className="size-4" fill="none" stroke="#fff"><path d="M2 14C2 7 7 3 14 3M5 14c0-5 4-8 9-8M8 14c0-3 3-5 6-5M11 14c0-1 1-2 3-2" /></svg>
        <svg viewBox="0 0 16 16" className="size-4" fill="none" stroke="#fff"><path d="M1 6h2l3-4v12l-3-4H1zM9 6c1 1 1 3 0 4M11 4c2 2 2 6 0 8M13 2c3 3 3 9 0 12" /></svg>
        <span className="text-sm">中</span>
      </div>
      <svg viewBox="0 0 28 28" className="ml-3 size-4"><path d="M2 4 24 1l2 21-20 5z" fill="#f04e1c" /><path d="M20 8c-5-3-11-1-11 2 0 4 10 2 10 6 0 4-7 5-11 2" fill="none" stroke="#fff" strokeWidth="3" /></svg>
      <div className="ml-3.5 w-16 text-center leading-[19px]">7:39<br />2017/7/21</div>
      <button type="button" aria-label="通知" className="relative mr-[18px] ml-4 flex h-full w-6 items-center">
        <svg viewBox="0 0 16 16" className="size-4"><path d="M0 0h16v12H6l-3 3v-3H0z" fill="#fff" /><path d="M3 3.500h10M3 6h10M3 8.500h6" stroke="#111" /></svg>
        <span className="absolute right-0 bottom-1 flex size-4 items-center justify-center rounded-full border border-[#888] bg-[#222] text-[11px]">2</span>
      </button>
      <span className="h-full w-px bg-[#444]" />
    </footer>
  );
}

export default function App() {
  return (
    <div className="flex h-screen min-h-[600px] flex-col overflow-hidden bg-[#f0f0f0] font-['Noto_Sans','Noto_Sans_CJK_SC',sans-serif] text-xs leading-4 text-black">
      <TitleBar />
      <MenuBar />
      <MainTools />
      <div className="flex min-h-0 flex-1">
        <Sidebar />
        <main className="flex min-w-0 flex-1 flex-col pl-1">
          <EditTools />
          <div className="relative mr-px min-h-0 flex-1 overflow-hidden bg-black">
            <Scene />
            <OffsetBar />
          </div>
          <div className="flex h-[30px] shrink-0 items-center">
            <div className={`${strip} h-7`}>
              <Grip />
              <Tool icon="ortho" label="正交" />
              <Tool icon="snap" label="对象捕捉" on />
              <Tool icon="dynInput" label="动态输入" />
            </div>
            <div className={`${strip} ml-1.5 h-7`}>
              <Grip />
              <Tool icon="cross" label="交点" />
              <Tool icon="perp" label="垂点" on />
              <Tool icon="mid" label="中点" on />
              <Tool icon="vertex" label="顶点" />
              <Tool icon="coord" label="坐标" />
            </div>
          </div>
        </main>
      </div>
      <StatusBar />
      <TaskBar />
    </div>
  );
}
